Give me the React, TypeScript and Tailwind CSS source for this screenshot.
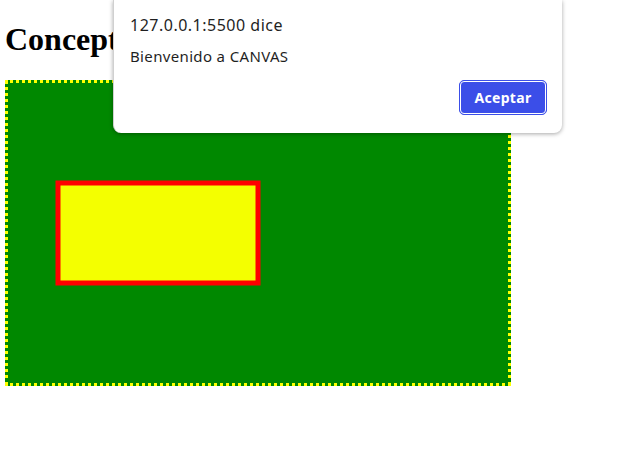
import React from "react";

// página de prueba de canvas con el alert del navegador encima
export default function App() {
  return (
    <div className="relative w-[641px] h-[466px] bg-white overflow-hidden">
      <div className="px-[5px] py-[21.44px]">
        <h1
          className="text-[32px] font-bold leading-[37px] text-black whitespace-nowrap"
          style={{ fontFamily: '"Liberation Serif", "Times New Roman", serif' }}
        >
          Concept
        </h1>
      </div>

      {/* el canvas */}
      <div className="ml-[5px] w-[506px] h-[306px] border-[3px] border-dotted border-[#ffff00] bg-[#008800]">
        <svg width="500" height="300" viewBox="0 0 500 300" className="block">
          <rect x="50" y="100" width="200" height="100" fill="#f4ff00" />
          <rect
            x="50"
            y="100"
            width="200"
            height="100"
            fill="none"
            stroke="#ff0000"
            strokeWidth="5"
          />
        </svg>
      </div>

      {/* alert del navegador */}
      <div
        className="absolute left-[113px] top-0 w-[449px] h-[133px] bg-white rounded-b-[8px] border-l border-[#d0d0d0] shadow-[0_1px_4px_rgba(0,0,0,0.35)] pl-[16px] pr-[15px]"
        style={{ fontFamily: '"Noto Sans", "Open Sans", sans-serif' }}
      >
        <div className="pt-[13px] text-[16px] leading-[24px] tracking-[0.5px] text-[#1f1f1f]">
          127.0.0.1:5500 dice
        </div>
        <div className="mt-[8px] text-[15px] leading-[22px] tracking-[0.35px] text-[#1f1f1f]">
          Bienvenido a CANVAS
        </div>
        <div className="flex justify-end mt-[13px]">
          <button className="w-[88px] h-[35px] rounded-[5px] border border-[#3b4ee8] bg-[#3b4ee8] p-0">
            <span className="flex h-full w-full items-center justify-center rounded-[4px] border border-white text-[14px] font-bold tracking-[0.3px] text-white">
              Aceptar
            </span>
          </button>
        </div>
      </div>
    </div>
  );
}
